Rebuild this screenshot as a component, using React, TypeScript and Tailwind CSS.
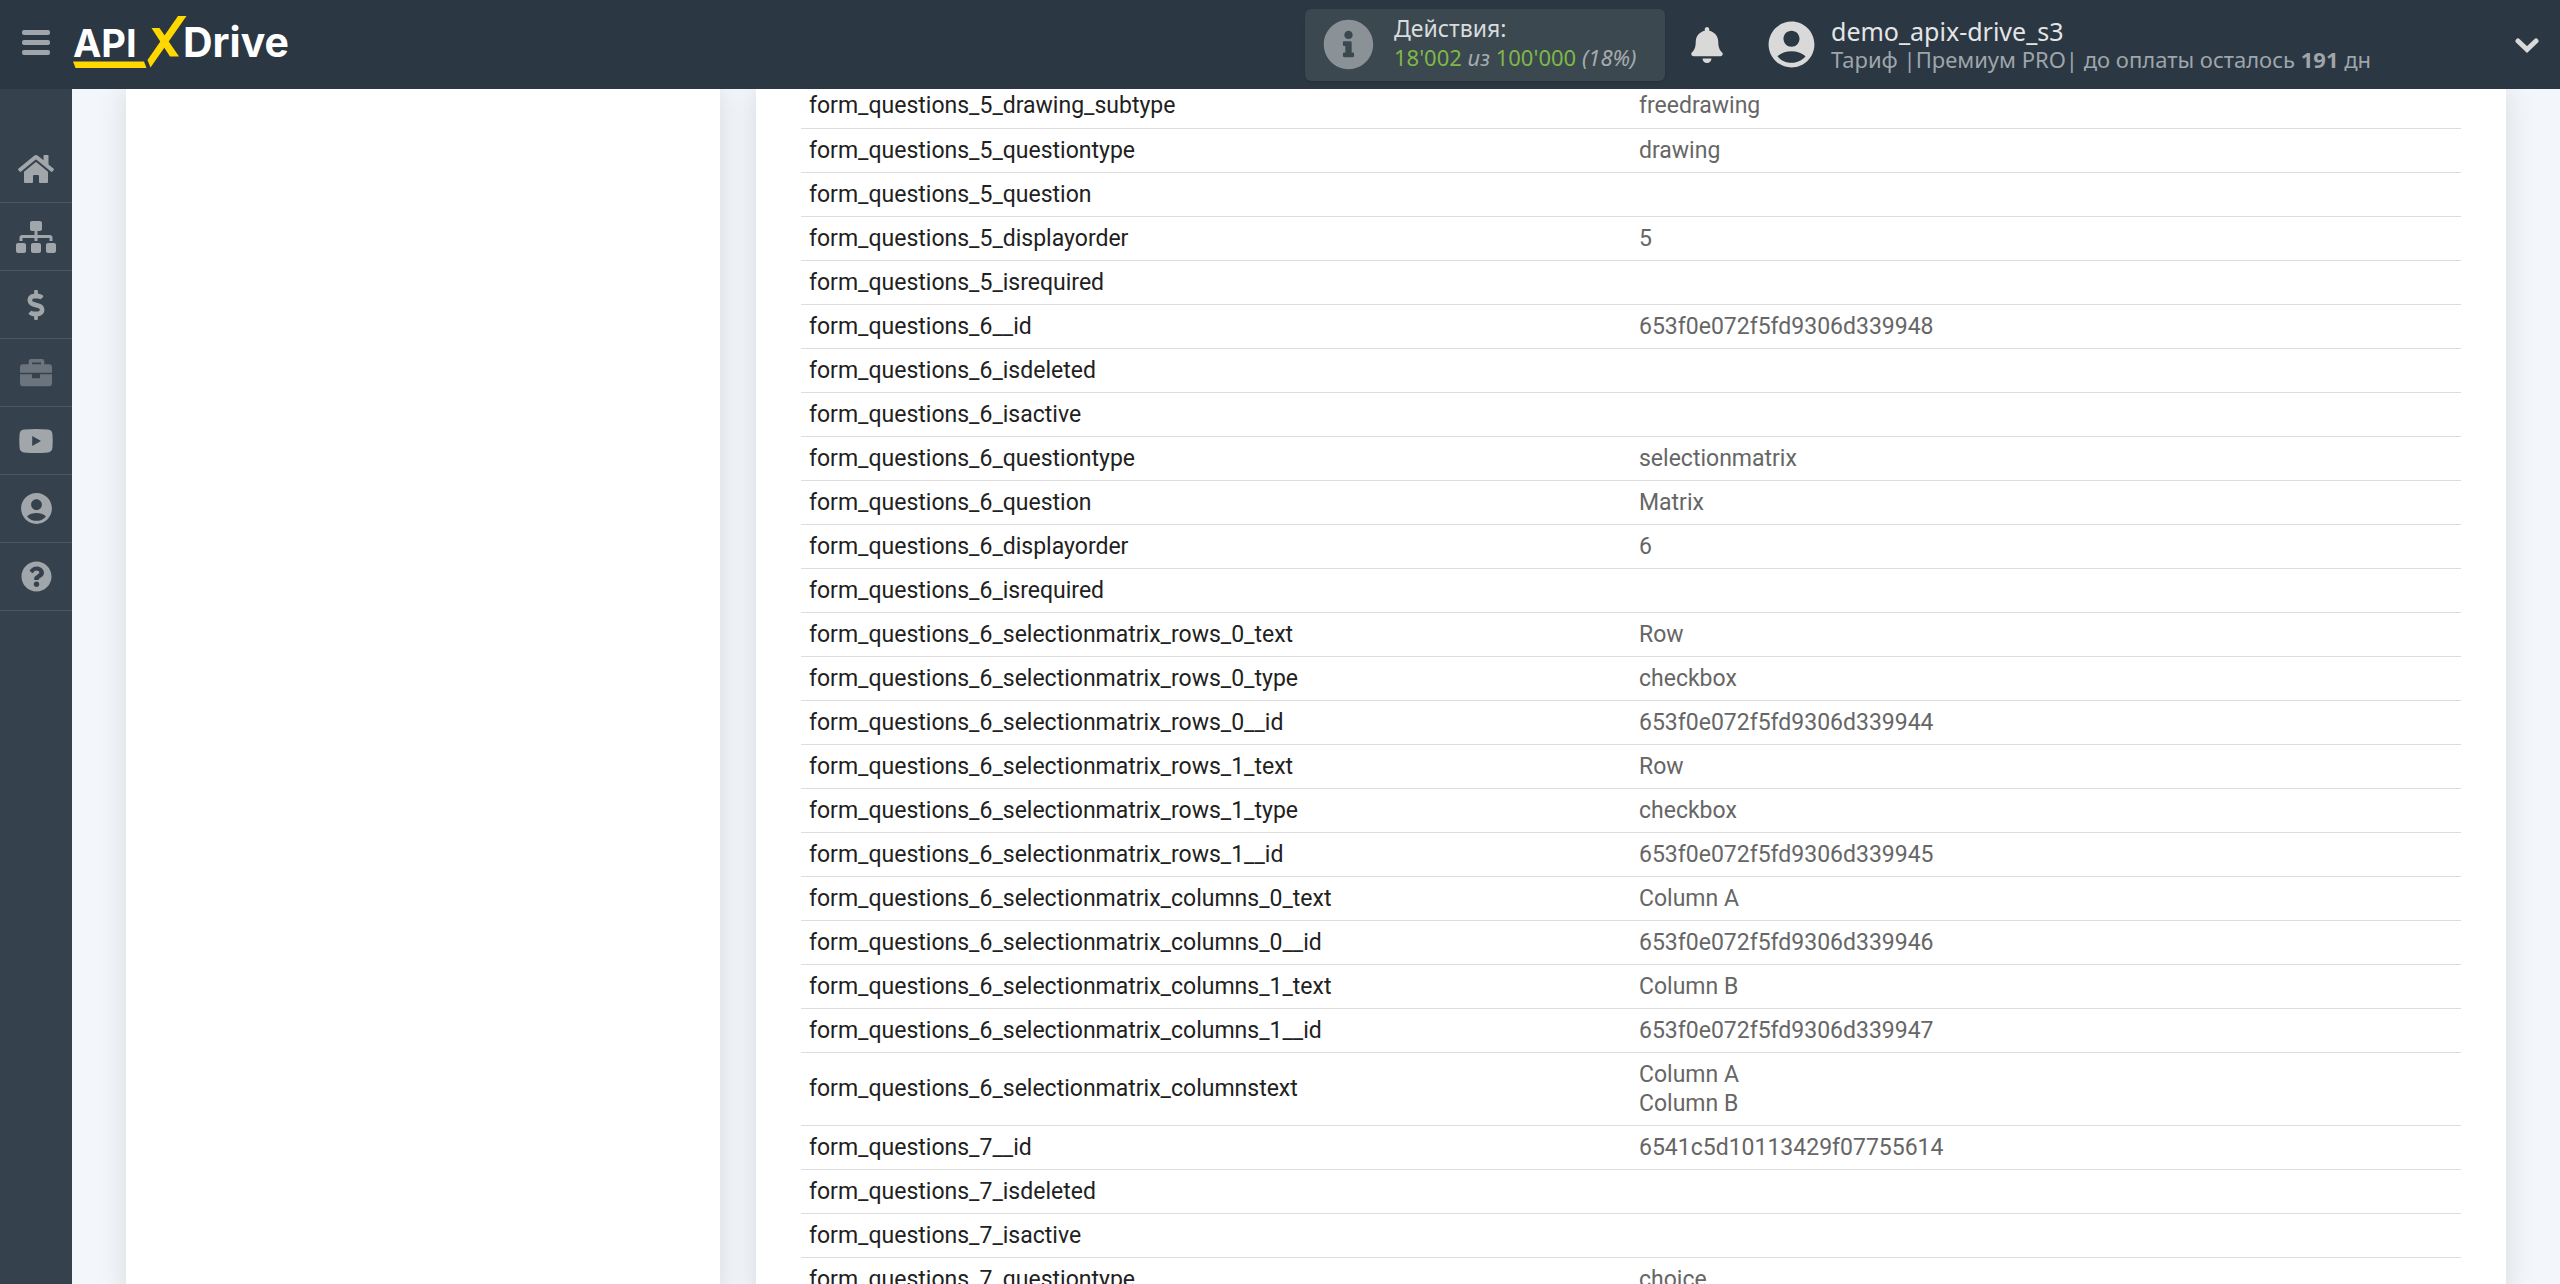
import React from 'react';
import { FaBell, FaDollarSign, FaHome, FaInfoCircle, FaQuestionCircle, FaSitemap } from 'react-icons/fa';
import { MdAccountCircle } from 'react-icons/md';

const fields = [
  { name: 'form_questions_5_drawing_subtype', value: 'freedrawing' },
  { name: 'form_questions_5_questiontype', value: 'drawing' },
  { name: 'form_questions_5_question', value: '' },
  { name: 'form_questions_5_displayorder', value: '5' },
  { name: 'form_questions_5_isrequired', value: '' },
  { name: 'form_questions_6__id', value: '653f0e072f5fd9306d339948' },
  { name: 'form_questions_6_isdeleted', value: '' },
  { name: 'form_questions_6_isactive', value: '' },
  { name: 'form_questions_6_questiontype', value: 'selectionmatrix' },
  { name: 'form_questions_6_question', value: 'Matrix' },
  { name: 'form_questions_6_displayorder', value: '6' },
  { name: 'form_questions_6_isrequired', value: '' },
  { name: 'form_questions_6_selectionmatrix_rows_0_text', value: 'Row' },
  { name: 'form_questions_6_selectionmatrix_rows_0_type', value: 'checkbox' },
  { name: 'form_questions_6_selectionmatrix_rows_0__id', value: '653f0e072f5fd9306d339944' },
  { name: 'form_questions_6_selectionmatrix_rows_1_text', value: 'Row' },
  { name: 'form_questions_6_selectionmatrix_rows_1_type', value: 'checkbox' },
  { name: 'form_questions_6_selectionmatrix_rows_1__id', value: '653f0e072f5fd9306d339945' },
  { name: 'form_questions_6_selectionmatrix_columns_0_text', value: 'Column A' },
  { name: 'form_questions_6_selectionmatrix_columns_0__id', value: '653f0e072f5fd9306d339946' },
  { name: 'form_questions_6_selectionmatrix_columns_1_text', value: 'Column B' },
  { name: 'form_questions_6_selectionmatrix_columns_1__id', value: '653f0e072f5fd9306d339947' },
  { name: 'form_questions_6_selectionmatrix_columnstext', value: 'Column A\nColumn B' },
  { name: 'form_questions_7__id', value: '6541c5d10113429f07755614' },
  { name: 'form_questions_7_isdeleted', value: '' },
  { name: 'form_questions_7_isactive', value: '' },
  { name: 'form_questions_7_questiontype', value: 'choice' },
];

const VideoIcon = () => (
  <svg viewBox="0 0 34 24" className="w-[34px] h-6" fill="currentColor">
    <path
      fillRule="evenodd"
      d="M5 .6Q17-.4 29 .6Q33 1 33.4 5Q34 12 33.4 19Q33 23 29 23.4Q17 24.4 5 23.4Q1 23 .6 19Q0 12 .6 5Q1 1 5 .6ZM13.2 7V17L22 12Z"
    />
  </svg>
);

const BriefcaseIcon = () => (
  <svg viewBox="0 0 32 28" className="w-8 h-7" fill="currentColor">
    <path
      fillRule="evenodd"
      d="M8.7 5.3V2.5Q8.7 0 11.2 0H21.8Q24.3 0 24.3 2.5V5.3H29Q32 5.3 32 8.3V13.7H0V8.3Q0 5.3 3 5.3ZM12 3.5V5.3H21V3.5Z"
    />
    <path d="M0 15.2H12V19.2H20V15.2H32V24.3Q32 27.3 29 27.3H3Q0 27.3 0 24.3Z" />
  </svg>
);

const menu = [
  { label: 'Главная', icon: <FaHome className="w-9 h-9" /> },
  { label: 'Связи', icon: <FaSitemap className="w-10 h-8" /> },
  { label: 'Оплата', icon: <FaDollarSign className="w-[30px] h-[30px]" /> },
  { label: 'Проекты', icon: <BriefcaseIcon />, dimmed: true },
  { label: 'Видео', icon: <VideoIcon /> },
  { label: 'Профиль', icon: <MdAccountCircle className="w-[37px] h-[37px]" /> },
  { label: 'Помощь', icon: <FaQuestionCircle className="w-[31px] h-[31px]" /> },
];

const Logo = () => (
  <a href="#" className="relative flex items-baseline text-white font-['Inter',sans-serif] font-bold leading-10">
    <span className="w-[110px] text-[38px] leading-10">API</span>
    <span className="text-[41px] leading-10">Drive</span>
    <svg viewBox="0 0 114 52" className="absolute left-0 -top-[6px] w-[114px] h-[52px]" fill="#ffd800">
      <path d="M0 45.5H71L73.5 52H2.5Z" />
      <path d="M105 0H113.5L77.5 51.5L74.5 44Z" />
      <path d="M78.5 12H86.5L106 40.5H97Z" />
    </svg>
  </a>
);

const Header = () => (
  <header className="relative z-10 shrink-0 flex items-center h-[89px] bg-[#2b3742] font-['Noto_Sans',sans-serif]">
    <div className="flex items-center pb-1">
      <button type="button" aria-label="Меню" className="flex flex-col gap-[5px] ml-[22px] mr-[23px]">
        <span className="w-7 h-[5px] rounded-xs bg-[#9fa5aa]" />
        <span className="w-7 h-[5px] rounded-xs bg-[#9fa5aa]" />
        <span className="w-7 h-[5px] rounded-xs bg-[#9fa5aa]" />
      </button>
      <Logo />
    </div>

    <div className="flex items-center ml-auto w-[360px] h-[72px] px-[18px] gap-5 rounded-md bg-[#3b4850] shadow-sm">
      <FaInfoCircle className="shrink-0 w-[51px] h-[51px] text-[#8a9297]" />
      <div className="pb-1 whitespace-nowrap text-[#a5abaf]">
        <p className="text-[23px] leading-[29px] text-[#d9dbdc]">Действия:</p>
        <p className="text-[22px] leading-[29px]">
          <span className="text-[#7fb848]">18'002</span> <i>из</i> <span className="text-[#7fb848]">100'000</span>{' '}
          <i>(18%)</i>
        </p>
      </div>
    </div>

    <button type="button" aria-label="Уведомления" className="ml-6 text-[#d9d9d9]">
      <FaBell className="w-9 h-9" />
    </button>

    <button type="button" className="flex items-center ml-[39px] text-left">
      <MdAccountCircle className="w-[55px] h-[55px] text-[#d9d9d9]" />
      <span className="flex flex-col w-[684px] ml-3">
        <span className="text-[25px] leading-7 text-[#e4e5e6]">demo_apix-drive_s3</span>
        <span className="text-[22px] leading-7 text-[#9fa5aa]">
          Тариф |Премиум PRO| до оплаты осталось <b>191</b> дн
        </span>
      </span>
      <svg viewBox="0 0 24 16" className="w-6 h-4 mr-[21px]" fill="none" stroke="#d9d9d9" strokeWidth="5" strokeLinecap="round">
        <path d="M3 4L12 12.5L21 4" />
      </svg>
    </button>
  </header>
);

const Sidebar = () => (
  <nav className="shrink-0 w-[72px] pt-[46px] bg-[#36414e]">
    {menu.map((item) => (
      <a
        key={item.label}
        href="#"
        aria-label={item.label}
        className="flex items-center justify-center h-[68px] border-b border-[#4a5662] text-[#a0a6aa]"
      >
        <span className={item.dimmed ? 'opacity-50' : ''}>{item.icon}</span>
      </a>
    ))}
  </nav>
);

export default function App() {
  return (
    <div className="flex flex-col h-screen overflow-hidden bg-[#f3f7fc]">
      <Header />
      <div className="flex flex-1 min-h-0">
        <Sidebar />
        <main className="flex-1 grid grid-cols-[594fr_1750fr] gap-9 px-[54px] overflow-hidden">
          <section className="bg-white shadow-[0_0_28px_rgba(0,0,0,0.12)]" />
          <section className="px-[45px] bg-white shadow-[0_0_28px_rgba(0,0,0,0.12)]">
            <table className="-mt-[5px] w-full table-fixed font-['Roboto',sans-serif] text-[23px] leading-[29px]">
              <tbody>
                {fields.map((field) => (
                  <tr key={field.name} className="h-11 border-b border-[#dddddd]">
                    <th scope="row" className="px-2 py-[7px] text-left font-normal text-[#212121]">
                      {field.name}
                    </th>
                    <td className="px-2 py-[7px] whitespace-pre-line text-[#666666]">{field.value}</td>
                  </tr>
                ))}
              </tbody>
            </table>
          </section>
        </main>
      </div>
    </div>
  );
}
